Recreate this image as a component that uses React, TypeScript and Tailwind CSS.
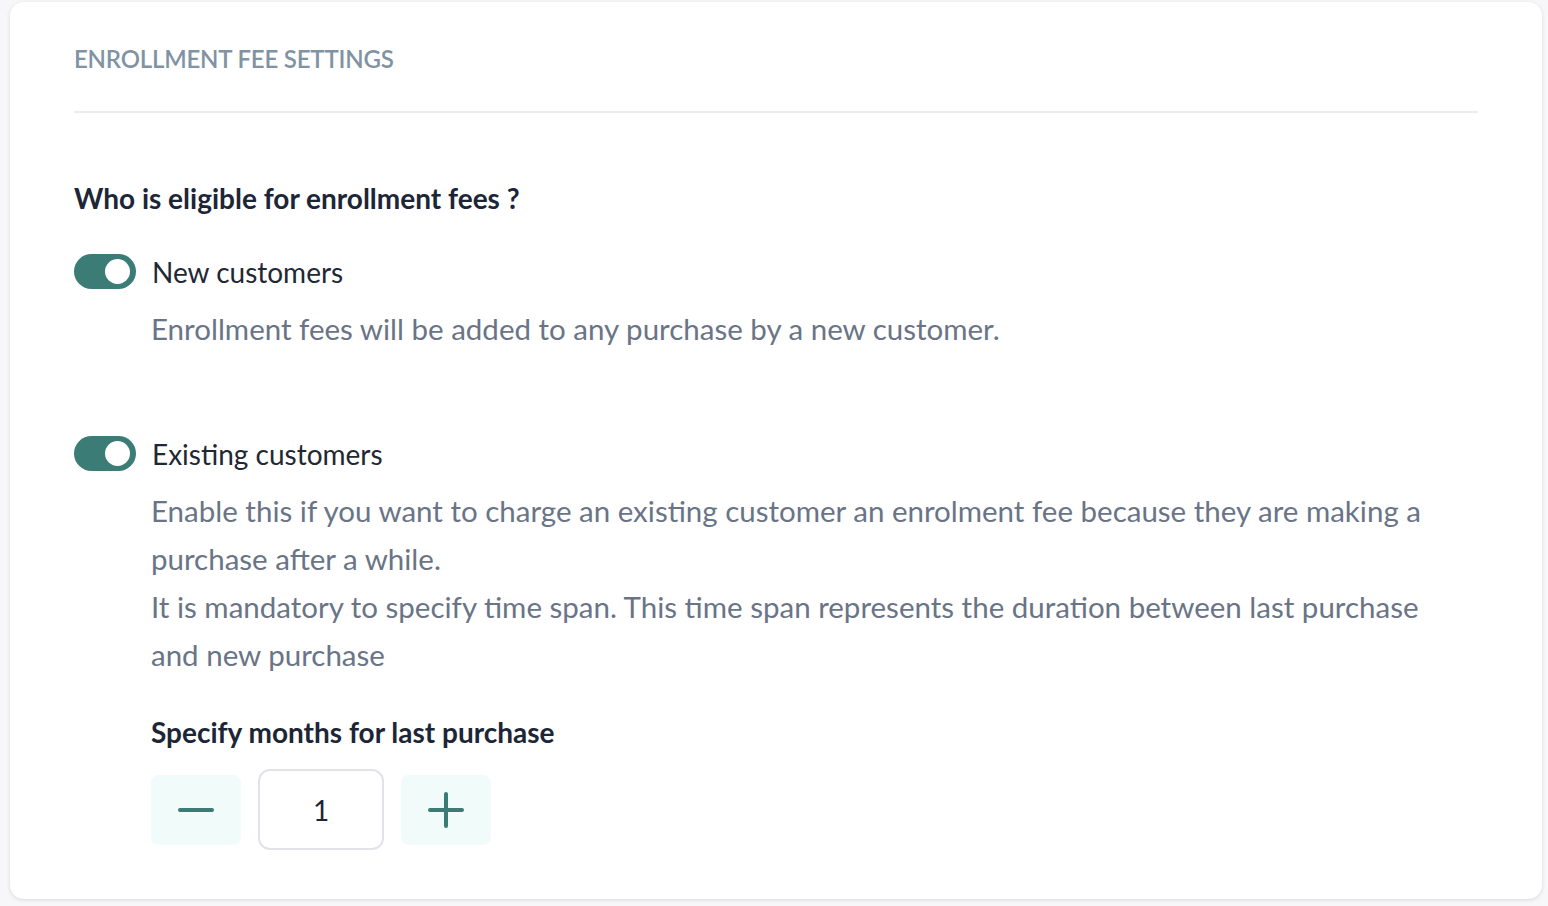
import React, { useState } from "react";

function Toggle({ on }: { on: boolean }) {
  return (
    <div className="w-[62px] h-[35px] rounded-full bg-[#3b7d76] flex items-center justify-end px-[6px] shrink-0">
      <div className="w-[25px] h-[25px] rounded-full bg-white" />
    </div>
  );
}

export default function App() {
  const [months, setMonths] = useState(1);
  return (
    <div
      className="w-[1548px] h-[906px] bg-[#f7f7f9] pt-[2px] pl-[10px] pr-[6px] pb-[7px]"
      style={{ fontFamily: "Lato, 'Open Sans', sans-serif" }}
    >
      <div className="bg-white rounded-[14px] shadow-[0_1px_4px_rgba(0,0,0,0.12)] h-[897px] px-[64px] pt-[42px]">
        <div className="text-[24px] font-semibold text-[#7f93a3] tracking-[-0.2px] leading-[30px]">
          ENROLLMENT FEE SETTINGS
        </div>
        <div className="mt-[37px] h-[2px] bg-[#ececf0]" />
        <div className="mt-[68px] text-[28px] font-bold text-[#1c2636] leading-[34px]">
          Who is eligible for enrollment fees ?
        </div>

        <div className="mt-[39px] flex items-center gap-[16px]">
          <Toggle on />
          <span className="text-[28px] text-[#1f2833] leading-[34px]">New customers</span>
        </div>
        <div className="pl-[77px] mt-[21px] text-[29.5px] text-[#6a7487] leading-[38px]">
          Enrollment fees will be added to any purchase by a new customer.
        </div>

        <div className="mt-[88px] flex items-center gap-[16px]">
          <Toggle on />
          <span className="text-[28px] text-[#1f2833] leading-[34px]">Existing customers</span>
        </div>
        <div className="pl-[77px] mt-[16px] text-[29.5px] text-[#6a7487] leading-[48px]">
          <div className="pr-[40px]">
            Enable this if you want to charge an existing customer an enrolment fee because they are making a purchase after a while.
          </div>
          <div className="pr-[40px]">
            It is mandatory to specify time span. This time span represents the duration between last purchase and new purchase
          </div>
          <div className="mt-[36px] text-[28px] font-bold text-[#1c2636] leading-[34px]">
            Specify months for last purchase
          </div>
          <div className="mt-[20px] flex items-center gap-[17px]">
            <button
              onClick={() => setMonths(Math.max(1, months - 1))}
              className="w-[90px] h-[70px] rounded-[8px] bg-[#f1fbfa] flex items-center justify-center"
            >
              <svg width="36" height="36" viewBox="0 0 36 36" fill="none">
                <path d="M2 18h32" stroke="#3b7d76" strokeWidth="4" strokeLinecap="round" />
              </svg>
            </button>
            <div className="w-[126px] h-[81px] rounded-[12px] border-2 border-[#e1e3e8] flex items-center justify-center text-[28px] text-[#1c2636]">
              {months}
            </div>
            <button
              onClick={() => setMonths(months + 1)}
              className="w-[90px] h-[70px] rounded-[8px] bg-[#f1fbfa] flex items-center justify-center"
            >
              <svg width="36" height="36" viewBox="0 0 36 36" fill="none">
                <path d="M2 18h32M18 2v32" stroke="#3b7d76" strokeWidth="4" strokeLinecap="round" />
              </svg>
            </button>
          </div>
        </div>
      </div>
    </div>
  );
}
